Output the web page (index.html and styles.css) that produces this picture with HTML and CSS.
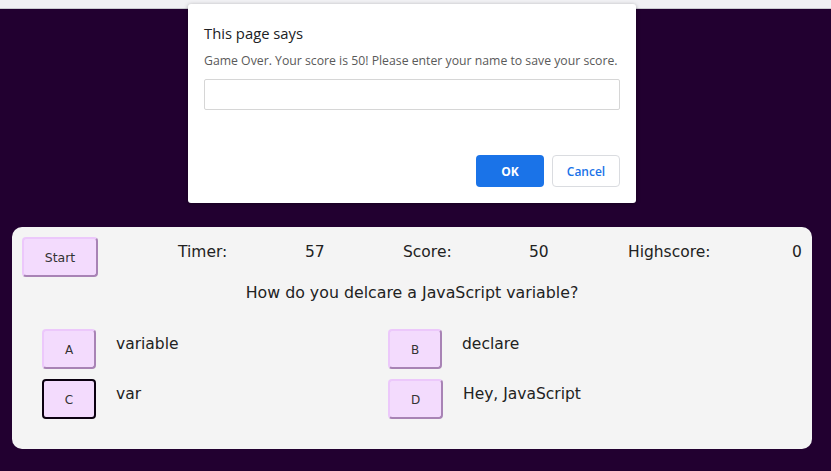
FILE: index.html
```html
<!DOCTYPE html>
<html>
<head>
<meta charset="utf-8">
<link rel="stylesheet" href="styles.css">
</head>
<body>
<div class="topstrip"></div>
<main class="page">
  <section class="card">
    <div class="header">
      <button class="btn start">Start</button>
      <span class="stat">Timer:</span>
      <span class="stat">57</span>
      <span class="stat">Score:</span>
      <span class="stat">50</span>
      <span class="stat">Highscore:</span>
      <span class="stat">0</span>
    </div>
    <p class="question">How do you delcare a JavaScript variable?</p>
    <div class="answers">
      <div class="answer"><button class="btn letter">A</button><span class="label">variable</span></div>
      <div class="answer"><button class="btn letter">B</button><span class="label">declare</span></div>
      <div class="answer"><button class="btn letter focused">C</button><span class="label">var</span></div>
      <div class="answer"><button class="btn letter wide">D</button><span class="label">Hey, JavaScript</span></div>
    </div>
  </section>
</main>
<div class="dialog">
  <div class="dlg-title">This page says</div>
  <div class="dlg-msg">Game Over. Your score is 50! Please enter your name to save your score.</div>
  <div class="dlg-input"></div>
  <div class="dlg-actions">
    <button class="dlg-btn ok">OK</button>
    <button class="dlg-btn cancel">Cancel</button>
  </div>
</div>
</body>
</html>
```
FILE: styles.css
```css
html, body {
  margin: 0;
  padding: 0;
}
body {
  background: #220030;
  width: 831px;
  height: 471px;
  overflow: hidden;
  font-family: "DejaVu Sans", sans-serif;
  color: #222;
}
.topstrip {
  height: 8px;
  background: #f1f1f4;
  border-bottom: 1px solid #c9c9cf;
}
.page {
  padding: 218px 0 0 12px;
}
.card {
  width: 780px;
  background: #f4f4f4;
  border-radius: 10px;
  padding: 10px 10px 30px 10px;
}
.header {
  display: grid;
  grid-template-columns: 156px 127px 98px 126px 99px 164px auto;
  align-items: start;
}
.btn {
  font-family: "DejaVu Sans", sans-serif;
  background: #f3dbfd;
  border: 2px solid;
  border-color: #ecc8fb #a883b5 #a883b5 #ecc8fb;
  border-radius: 4px;
  color: #333;
  padding: 0;
  font-size: 12px;
}
.start {
  width: 76px;
  height: 40px;
  font-size: 12.5px;
  padding-top: 1px;
}
.stat {
  font-size: 15.5px;
  line-height: 20px;
  padding-top: 5px;
  color: #222;
}
.question {
  margin: 5px 0 0;
  text-align: center;
  font-size: 15.8px;
  line-height: 22px;
}
.answers {
  display: grid;
  grid-template-columns: 346px 1fr;
  row-gap: 10px;
  padding: 25px 0 0 20px;
}
.answer {
  display: flex;
  align-items: flex-start;
}
.letter {
  width: 54px;
  height: 40px;
  font-size: 12px;
  padding-top: 2px;
}
.wide {
  width: 55px;
}
.focused {
  border-color: #0b0010;
}
.label {
  margin-left: 20px;
  font-size: 15.5px;
  line-height: 20px;
  padding-top: 5px;
  color: #222;
}
.dialog {
  position: absolute;
  left: 188px;
  top: 4px;
  width: 448px;
  height: 199px;
  box-sizing: border-box;
  background: #fff;
  border-radius: 3px;
  box-shadow: 0 1px 4px rgba(0,0,0,0.35);
  padding: 20px 16px 0 16px;
  font-family: "Open Sans", sans-serif;
}
.dlg-title {
  font-size: 14.8px;
  color: #202124;
  line-height: 18px;
}
.dlg-msg {
  margin-top: 11px;
  font-size: 12.25px;
  color: #5a5a5a;
  line-height: 16px;
}
.dlg-input {
  margin-top: 10px;
  height: 31px;
  border: 1px solid #d6d6d6;
  border-radius: 2px;
  box-sizing: border-box;
}
.dlg-actions {
  display: flex;
  justify-content: flex-end;
  gap: 8px;
  margin-top: 45px;
}
.dlg-btn {
  width: 68px;
  height: 32px;
  border-radius: 4px;
  font-family: "Open Sans", sans-serif;
  font-size: 12px;
  box-sizing: border-box;
}
.ok {
  background: #1a73e8;
  border: none;
  color: #fff;
  font-weight: 700;
}
.cancel {
  background: #fff;
  border: 1px solid #dadce0;
  color: #1a73e8;
  font-weight: 600;
}
```
